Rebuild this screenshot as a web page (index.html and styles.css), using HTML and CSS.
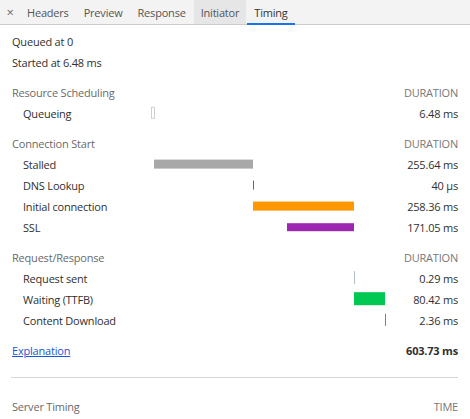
FILE: index.html
```html
<!DOCTYPE html>
<html>
<head>
<meta charset="utf-8">
<link rel="stylesheet" href="styles.css">
</head>
<body>
<div class="tabbar">
  <div class="close">×</div>
  <div class="tab">Headers</div>
  <div class="tab">Preview</div>
  <div class="tab">Response</div>
  <div class="tab hover">Initiator</div>
  <div class="tab active">Timing</div>
</div>
<div class="content">
  <div class="line">Queued at 0</div>
  <div class="line">Started at 6.48 ms</div>

  <div class="grid section">
    <div class="group">Resource Scheduling</div><div class="dur head">DURATION</div>
    <div class="label">Queueing</div><div class="bars"><span class="bar queue" style="left:0px;width:4px"></span></div><div class="dur">6.48 ms</div>
  </div>

  <div class="grid section">
    <div class="group">Connection Start</div><div class="dur head">DURATION</div>
    <div class="label">Stalled</div><div class="bars"><span class="bar stalled" style="left:3px;width:99px"></span></div><div class="dur">255.64 ms</div>
    <div class="label">DNS Lookup</div><div class="bars"><span class="bar dns" style="left:102px;width:1px"></span></div><div class="dur">40 µs</div>
    <div class="label">Initial connection</div><div class="bars"><span class="bar connect" style="left:102px;width:101px"></span></div><div class="dur">258.36 ms</div>
    <div class="label">SSL</div><div class="bars"><span class="bar ssl" style="left:136px;width:67px"></span></div><div class="dur">171.05 ms</div>
  </div>

  <div class="grid section">
    <div class="group">Request/Response</div><div class="dur head">DURATION</div>
    <div class="label">Request sent</div><div class="bars"><span class="bar sent" style="left:203px;width:1px"></span></div><div class="dur">0.29 ms</div>
    <div class="label">Waiting (TTFB)</div><div class="bars"><span class="bar waiting" style="left:203px;width:31px"></span></div><div class="dur">80.42 ms</div>
    <div class="label">Content Download</div><div class="bars"><span class="bar download" style="left:234px;width:1px"></span></div><div class="dur">2.36 ms</div>
  </div>

  <div class="grid section">
    <div class="group"><a class="link" href="#">Explanation</a></div><div class="dur total">603.73 ms</div>
  </div>

  <hr class="sep">

  <div class="grid server">
    <div class="group">Server Timing</div><div class="dur head">TIME</div>
  </div>
</div>
</body>
</html>
```

FILE: styles.css
```css
html, body {
  margin: 0;
  padding: 0;
  background: #fff;
}
body {
  font-family: "Open Sans", "Noto Sans", sans-serif;
  font-size: 11px;
  letter-spacing: -0.2px;
  color: #303030;
}
.tabbar {
  display: flex;
  align-items: stretch;
  height: 24px;
  background: #f3f3f3;
  border-bottom: 1px solid #cbcbcb;
}
.close {
  width: 20px;
  display: flex;
  align-items: center;
  justify-content: center;
  color: #6e6e6e;
  font-size: 13px;
}
.tab {
  display: flex;
  align-items: center;
  padding: 0 7px;
  margin-right: 1px;
  color: #555;
  position: relative;
}
.tab.hover {
  background: #e6e6e6;
}
.tab.active {
  color: #333;
}
.tab.active::after {
  content: "";
  position: absolute;
  left: 0;
  right: 0;
  bottom: -1px;
  height: 2px;
  background: #1a73e8;
}
.content {
  padding: 6px 12px 0 12px;
}
.line {
  height: 21px;
  line-height: 21px;
}
.grid {
  display: grid;
  grid-template-columns: 139px 234px 1fr;
  grid-auto-rows: 21px;
  align-items: center;
}
.section {
  margin-top: 9px;
}
.group {
  grid-column: 1 / 3;
  color: #6a6a6a;
}
.label {
  padding-left: 11px;
}
.dur {
  text-align: right;
}
.dur.head {
  color: #777;
}
.dur.total {
  font-weight: bold;
}
.bars {
  position: relative;
  height: 21px;
}
.bar {
  position: absolute;
  top: 50%;
  transform: translateY(-60%);
  height: 9px;
}
.bar.queue {
  height: 12px;
  border: 1px solid #d0d0d0;
  box-sizing: border-box;
  width: 4px;
}
.bar.stalled { background: #a8a8a8; }
.bar.dns { background: #009688; }
.bar.connect { background: #ff9800; }
.bar.ssl { background: #9c27b0; height: 8px; }
.bar.sent { background: #b0bec5; height: 13px; }
.bar.waiting { background: #00c853; height: 13px; }
.bar.download { background: #03a9f4; height: 12px; }
.link {
  color: #1a55d8;
  text-decoration: underline;
}
.sep {
  border: 0;
  border-top: 1px solid #d6d6d6;
  margin: 16px 0 18px -1px;
}
```
